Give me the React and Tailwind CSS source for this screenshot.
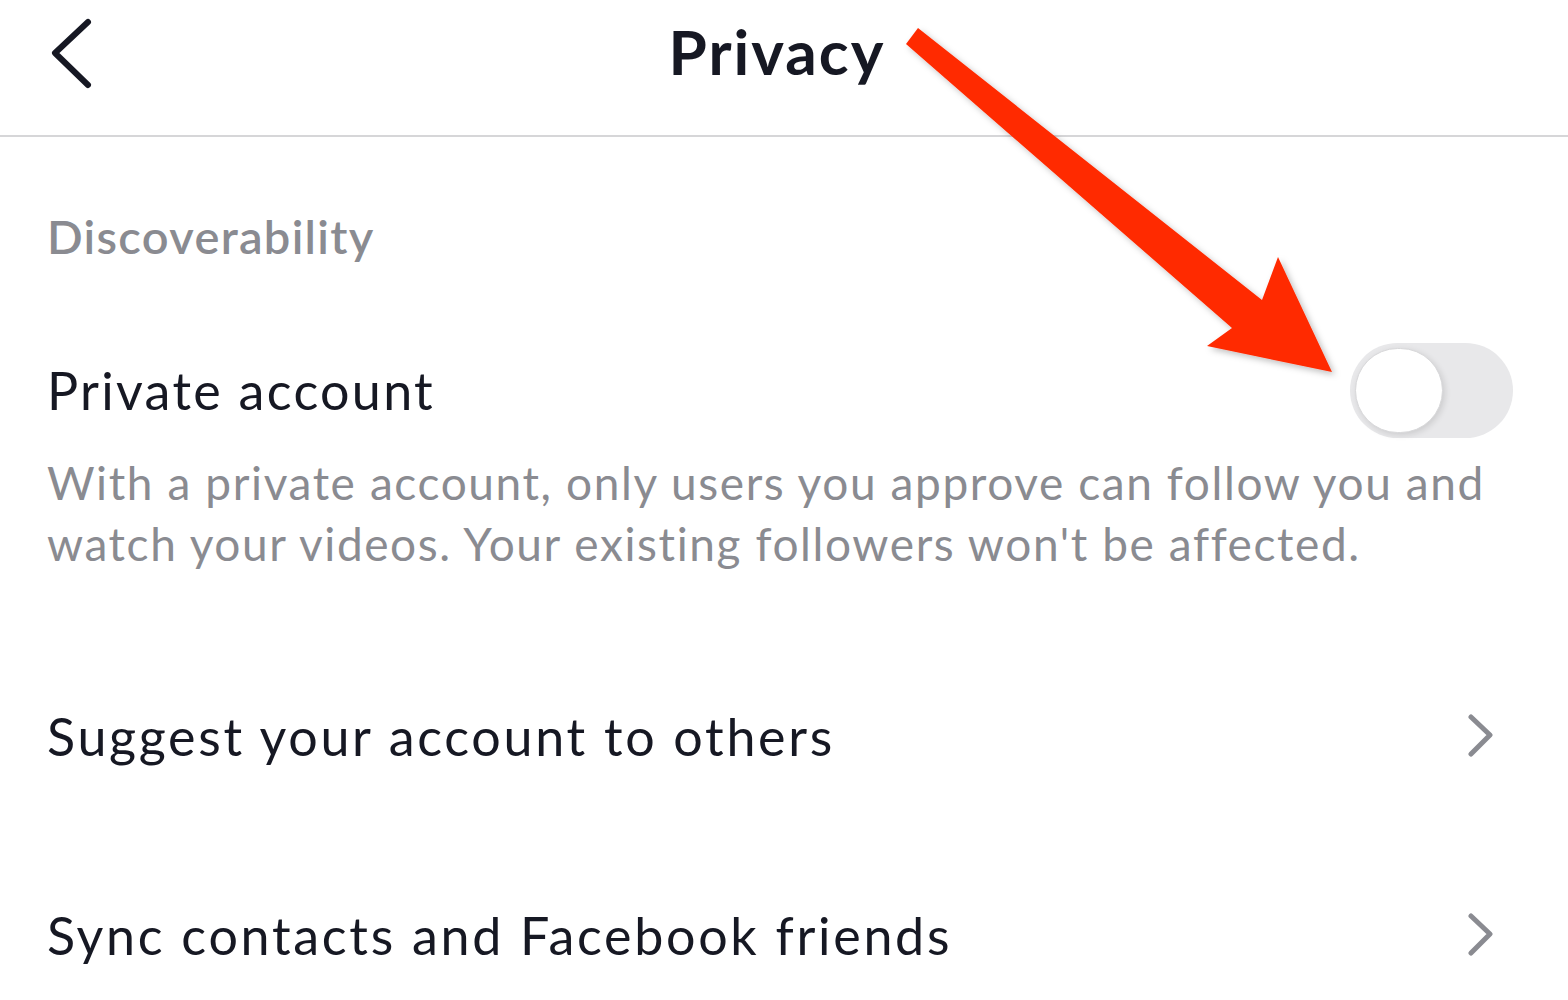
import React from "react";

const font = { fontFamily: "Lato, 'Open Sans', sans-serif" };

function ChevronRight() {
  return (
    <svg width="30" height="44" viewBox="0 0 30 44" className="shrink-0">
      <path d="M5 3 L24 21 L5 40" fill="none" stroke="#8a8b91" strokeWidth="5" strokeLinecap="round" strokeLinejoin="round" />
    </svg>
  );
}

function Toggle() {
  return (
    <div className="w-[163px] h-[95px] rounded-full bg-[#e8e8ea] p-[5px] flex items-center">
      <div className="w-[88px] h-[85px] rounded-full bg-white border border-[#d8d8da] shadow-[2px_2px_6px_rgba(0,0,0,0.12)]" />
    </div>
  );
}

function Row({ label }) {
  return (
    <div className="h-[199px] flex items-center justify-between pl-[47px] pr-[72px]">
      <span className="text-[52px] tracking-[2.7px] text-[#161823]">{label}</span>
      <ChevronRight />
    </div>
  );
}

export default function App() {
  return (
    <div className="relative w-[1568px] h-[1000px] overflow-hidden bg-white" style={font}>
      {/* header */}
      <div className="relative h-[137px] border-b-2 border-[#d6d6d8] flex items-center justify-center">
        <svg width="50" height="76" viewBox="0 0 50 76" className="absolute left-[48px] top-[16px]">
          <path d="M40 6 L7 37 L40 69" fill="none" stroke="#161823" strokeWidth="6" strokeLinecap="round" strokeLinejoin="round" />
        </svg>
        <h1 className="text-[62px] font-bold tracking-[2px] text-[#161823] -mt-[32px] -ml-[14px]">Privacy</h1>
      </div>

      <div className="h-[199px] flex items-center pl-[47px]">
        <span className="text-[47px] font-semibold tracking-[1.3px] text-[#8a8b91]">Discoverability</span>
      </div>

      <div className="h-[108px] flex items-center justify-between pl-[47px] pr-[55px]">
        <span className="text-[52px] tracking-[2.3px] text-[#161823]">Private account</span>
        <Toggle />
      </div>
      <p className="mt-[8px] pl-[47px] pr-[40px] text-[46px] tracking-[1.6px] leading-[61px] text-[#8a8b91]">
        With a private account, only users you approve can follow you and watch your videos. Your existing followers won't be affected.
      </p>

      <div className="mt-[62px]">
        <Row label="Suggest your account to others" />
        <Row label="Sync contacts and Facebook friends" />
      </div>

      {/* annotation arrow */}
      <svg className="absolute left-0 top-0 pointer-events-none" width="1568" height="1000" viewBox="0 0 1568 1000">
        <defs>
          <filter id="sh" x="-10%" y="-10%" width="120%" height="120%">
            <feDropShadow dx="3" dy="3" stdDeviation="3" floodColor="#000" floodOpacity="0.25" />
          </filter>
        </defs>
        <polygon
          points="918,28 906,44 1232,328 1207,346 1332,372 1278,257 1262,300"
          fill="#ff2a00"
          filter="url(#sh)"
        />
      </svg>
    </div>
  );
}
